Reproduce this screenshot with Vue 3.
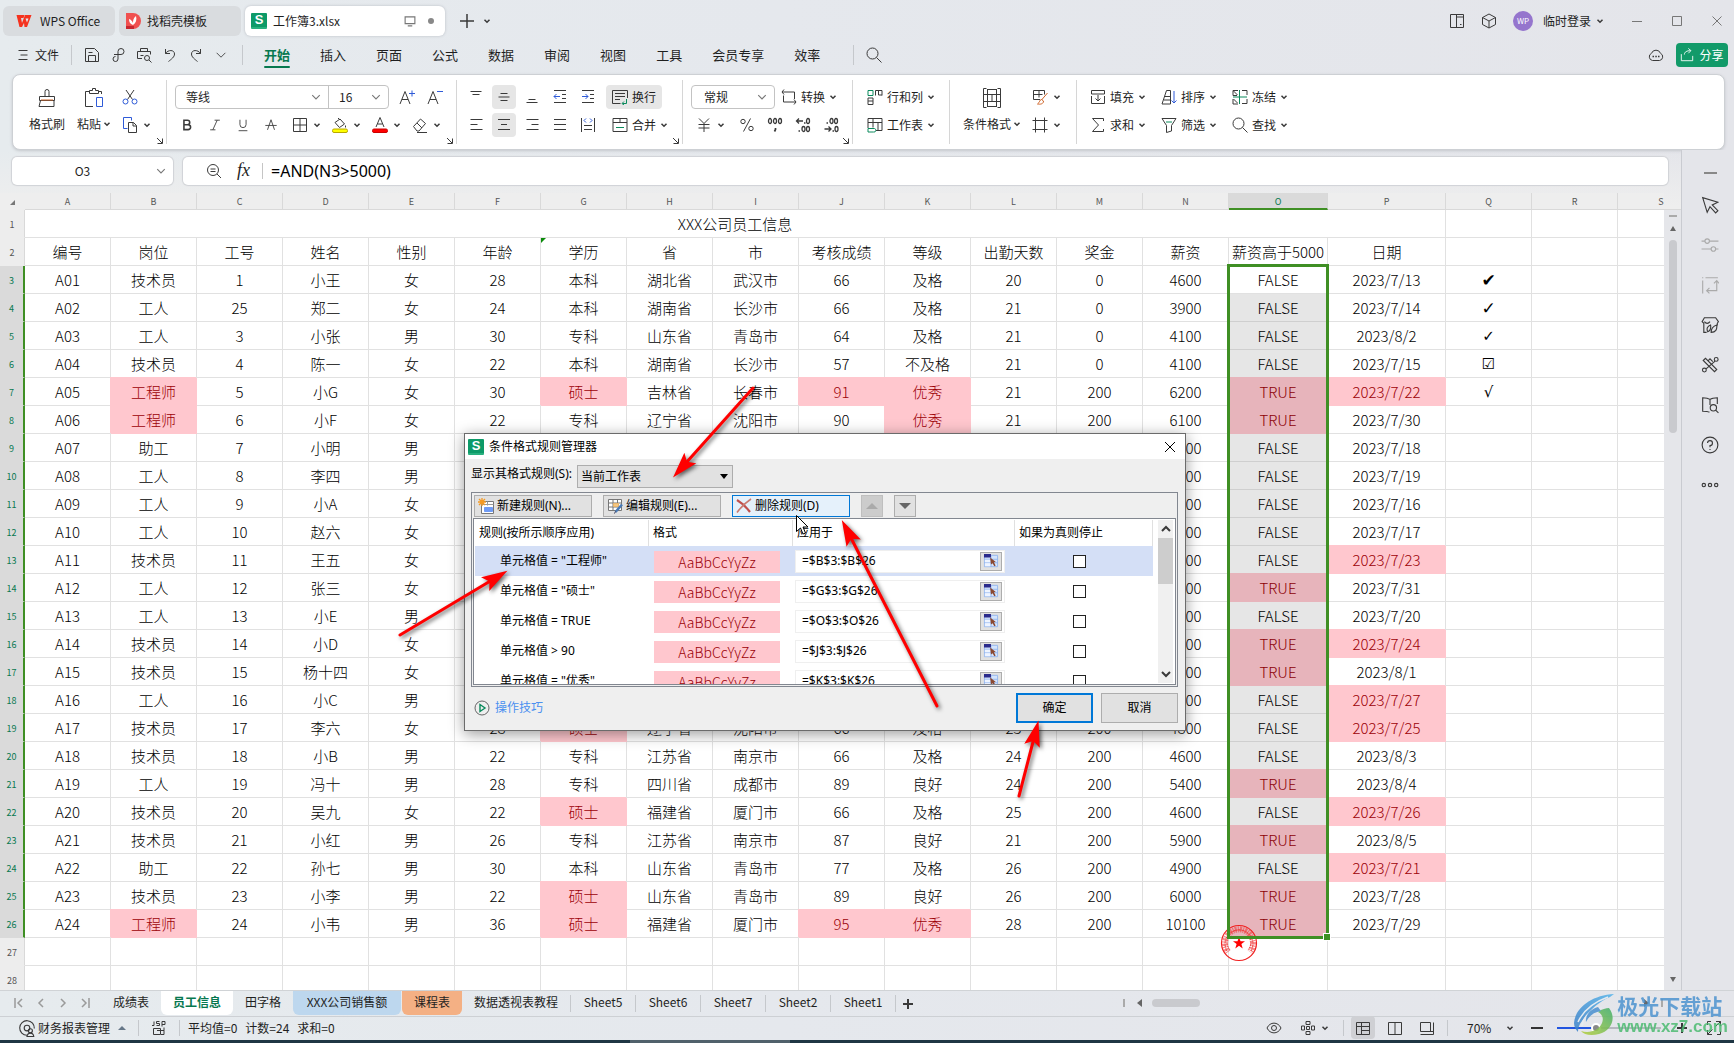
<script setup>
const G = '#0a8a5c'
const B = '#2f5bd8'
const O = '#d0662a'

// Icon bodies, drawn on a 16 x 16 grid
const ic = {
  menu: '<path d="M3.5 3.5h9M5.5 8h7M3.5 12.5h9"/>',
  save: '<path d="M1.5 1.5h9l4 4v9h-13zM4.5 14.5v-6h7v6M4.5 5.5h4"/>',
  link: '<path d="M5.5 9.5a2.5 2.5 0 1 0 2.500 2.500V4.500a3 3 0 1 1 3 3H4"/>',
  print: '<path d="M4.500 4.500v-3h7v3M6 11.500H1.500v-7h13v3M4.500 8.500h3"/><circle cx="11" cy="11" r="2.500"/><path d="M13 13l2.500 2.500"/>',
  undo: '<path d="M3.500 2v4.500h4.500M3.500 6.500C6 2.500 12.500 2.500 12.500 7c0 3-3 5-6 7.500"/>',
  redo: '<path d="M12.500 2v4.500H8M12.500 6.500C10 2.500 3.500 2.500 3.500 7c0 3 3 5 6 7.500"/>',
  chev: '<path d="M3 5.500l5 5 5-5"/>',
  search: '<circle cx="6.500" cy="6.500" r="5.500"/><path d="M10.500 10.500l5 5"/>',
  cut: `<path d="M4 1l6.500 9.500M12 1L5.500 10.500"/><g stroke="${B}"><circle cx="3.500" cy="12.500" r="2.500"/><circle cx="12.500" cy="12.500" r="2.500"/></g>`,
  copy: `<path stroke="${B}" d="M5.500 11.500h-4v-11h8v3"/><path d="M6.500 5.500h5l3 3v7h-8zM11 5.500v3.500h3.500"/>`,
  bold: '<path stroke-width="1.800" d="M4.500 2.500h4a2.600 2.600 0 0 1 0 5.200h-4zM4.500 7.700h4.800a2.800 2.800 0 0 1 0 5.600H4.500z"/>',
  italic: '<path d="M7.500 2.500h6M2.500 13.500h6M10.500 2.500l-5 11"/>',
  under: '<path d="M4.500 2v5.500a3.500 3.500 0 0 0 7 0V2M3 14.500h10"/>',
  strike: '<path d="M8 2L4 13.500M8 2l4 11.500M1.500 8.500h13"/>',
  border: '<path d="M1.500 1.500h13v13h-13zM8 1.500v13M1.500 8h13"/>',
  fill: '<path d="M3 5.500l5-3.500 4.500 5-5 3.500zM6 1l2 2M13.500 8.500v2"/><rect x="0.500" y="12" width="15" height="3.500" rx="1.500" fill="#ffff00" stroke="#b9a800"/>',
  font: '<path d="M8 0.500L4 10M8 0.500L12 10M5.500 7h5"/><rect x="0.500" y="12" width="15" height="3.500" rx="1.500" fill="#fe0000" stroke="#c00"/>',
  eraser: '<path d="M1.500 9.500l7-7.500 5 4.500-6.500 7.500H5zM5 6l5 5M5 15.500h10"/>',
  top: '<path d="M2.500 2.500h11M4.500 5.500h7"/>',
  mid: '<path d="M4.500 4.500h7M2.500 8h11M4.500 11.500h7"/>',
  bot: '<path d="M4.500 10.500h7M2.500 13.500h11"/>',
  left: '<path d="M2.500 2.500h12M2.500 7.500h7M2.500 12.500h12"/>',
  center: '<path d="M2 2.500h12M5 7.500h6M2 12.500h12"/>',
  right: '<path d="M2.500 2.500h12M7.500 7.500h7M2.500 12.500h12"/>',
  just: '<path d="M2 2.500h12M2 7.500h12M2 12.500h12"/>',
  outd: `<path d="M2 1.500h12M10 5.500h4M10 9.500h4M2 13.500h12"/><path stroke="${B}" d="M8 7.500H2M4.500 5L2 7.500 4.500 10"/>`,
  ind: `<path d="M2 1.500h12M10 5.500h4M10 9.500h4M2 13.500h12"/><path stroke="${B}" d="M2 7.500h6M5.500 5L8 7.500 5.500 10"/>`,
  dist: `<path d="M1.500 1v14M14.500 1v14M4 8.500h8M4 12.500h8"/><path stroke="${B}" d="M6 1.500L4 3.500l2 2M10 1.500l2 2-2 2"/>`,
  wrap: `<path d="M15.500 9V1.500H0.500v13h8M3 4.500h10M3 7.500h10M3 10.500h5"/><path stroke="${G}" d="M14.500 10v4.500h-4M12 12.500l-2 2 2 1.500"/>`,
  merge: `<path d="M1 1.500h14v13H1zM1 5.500h14M8 1.500v4"/><path stroke="${G}" d="M4 10.500h8"/>`,
  conv: '<path d="M3 0.500L1 3l2 2.500M1 3h12.500v7M13 15.500l2-2.500-2-2.500M15 13H2.500V6.500"/>',
  yen: '<path d="M3 1.500l5 5 5-5M8 6.500v8.500M2.500 7.500h11M2.500 11h11"/>',
  pct: '<circle cx="4" cy="4.500" r="2.200"/><circle cx="12" cy="11.500" r="2.200"/><path d="M11.500 1.500l-7 13"/>',
  th: '<g stroke-width="1.300"><ellipse cx="3" cy="4" rx="1.500" ry="2.500"/><ellipse cx="8" cy="4" rx="1.500" ry="2.500"/><ellipse cx="13" cy="4" rx="1.500" ry="2.500"/></g><path stroke-width="1.700" d="M8.500 11v1.500l-1 2"/>',
  dec0: '<g stroke-width="1.300"><ellipse cx="13" cy="4" rx="1.500" ry="2.500"/><path d="M9 6h1.500M8 4H1.500M4 1.500L1.500 4 4 6.500M3.500 14H5"/><ellipse cx="8.500" cy="12" rx="1.500" ry="2.500"/><ellipse cx="13" cy="12" rx="1.500" ry="2.500"/></g>',
  dec1: '<g stroke-width="1.300"><ellipse cx="8.500" cy="4" rx="1.500" ry="2.500"/><ellipse cx="13" cy="4" rx="1.500" ry="2.500"/><path d="M3.500 6H5M1.500 12H8M5.500 9.500L8 12l-2.500 2.500M9.500 14H11"/><ellipse cx="13.500" cy="12" rx="1.500" ry="2.500"/></g>',
  rowcol: `<path stroke="${G}" d="M1 1.500h5v5H1z"/><path d="M8.500 6.500v-5h6.500v5M11.500 1.500v4.500h3.500M1 9h5v6.500H1zM1 12h5"/>`,
  sheet: `<path d="M1 11V1.500h14v12H9M1 5.500h14M6 1.500v9M11 5.500v8"/><path stroke="${G}" d="M1 11.500h6.500a1.500 1.500 0 0 1-1 3.500H1z"/>`,
  table: `<path d="M8 10.500H1.500v-9h11v4M1.500 5.500h9M7 1.500v7"/><path stroke="${O}" d="M15.500 4L9.500 11M9.500 10.500c-2 0-1.500 3-4 4.500 3 .5 6 0 6-3z"/>`,
  frame: '<path d="M3.500 0.500v15M12.500 0.500v15M0.500 3.500h15M0.500 12.500h15"/>',
  filld: '<path d="M1.500 5V1.500h13V5M1.500 7v7.500h13V7M1.500 5h13M8 6v6M5.500 9.500L8 12l2.500-2.500"/>',
  sum: '<path d="M13.500 4V1.500h-11L8.500 8l-6 6.500h11V12"/>',
  sort: `<path d="M1 15l4.500-13.500H9.500V15M1 15h8.500M4 7.500h5.500M3 11h6.500"/><path stroke="${B}" d="M13 2v12M10.500 11.500L13 14l2.500-2.500"/>`,
  filter: `<path d="M1 1.500h14l-4.500 7V14l-5 1.500V8.500z"/><path stroke="${G}" d="M5 5h6"/>`,
  freeze: `<path d="M1 1.500h5M1 1.500v5M1 6.500h4M1.500 2l4 4M10 1.500h5v4.500M1 10v5h5M1.500 10l4 4M10 14.500h5V10"/><path stroke="${G}" d="M7.500 1v14M1 8h14"/>`,
  zoomf: '<circle cx="7" cy="7" r="5.500"/><path d="M11 11l4 4M4.500 6h5M4.500 8.500h5"/>',
  tablet: '<path d="M1.500 1.500h13v13h-13zM7.500 1.500v13M7.500 4h7M11 11.500h1.500"/>',
  cube: '<path d="M8 1l6.500 3.500v7L8 15l-6.500-3.500v-7zM1.500 4.500L8 8l6.500-3.500M8 8v7"/>',
  cloud: '<path d="M4.500 13.500a3.800 3.800 0 0 1-1-7.200 4.800 4.800 0 0 1 9 0 3.800 3.800 0 0 1-1 7.200z"/><path stroke-width="1.500" d="M4.500 9.500H6M7.300 9.500h1.500M10 9.500h1.500"/>',
  share: '<path d="M5 7.500c0-3 3-4.500 7-4.500M9.500 0.500L12.500 3 9.500 6M1.500 7v7.500h13V9"/>',
  monitor: '<path d="M1.500 2.500h13v9h-13zM5 14.500h6"/>',
  cursor: '<path d="M1.500 1.500l4 13 2.500-5 5 5.500 2-2-5-5 5-2.500z"/>',
  sliders: '<circle cx="5.500" cy="4.500" r="2"/><circle cx="11" cy="11.500" r="2"/><path d="M7.500 4.500h8M0.500 4.500h3M0.500 11.500H9M13 11.500h2.500"/>',
  swap: '<path d="M1.500 4v11.500M4 1.500h11M1 1.500h1M14 4v9H5M11.500 6.500L14 4l2 2.500M7.500 10.500L5 13l2.500 2.500"/>',
  story: '<path d="M5 14.500H2.500v-8L1 5l2-3.500h10L15.500 5l-1 1.500v2M3 5c1.500 2 3.500 2 5 0M6 14c-1.500-3 0-5 2.500-6 .5 3 0 5-2.500 6zM9 14.500c0-4 2-5.500 5-6.500.5 4-1 6.500-5 6.500z"/>',
  tools: '<path d="M2 4l2-2 10 10-2 2zM6 4.500l2-2 2.500 2.500"/><circle cx="3" cy="12.500" r="1.700"/><circle cx="13.500" cy="3" r="1.700"/><path d="M12.500 4.500L4.500 11.500"/>',
  book: '<path d="M8 3C6 1.500 4 1.500 1.500 1.500v12c2.500 0 4.500 0 6 1M8 3c2-1.500 4-1.500 6.500-1.500V7M8 3v5"/><circle cx="11" cy="10.500" r="2.800"/><path d="M13 12.500l2.500 2.500"/>',
  help: '<circle cx="8" cy="8" r="7"/><path d="M5.800 6.200A2.200 2.200 0 1 1 8 8.500V10M8 11.500v1"/>',
  more: '<circle cx="2.500" cy="8" r="1.500"/><circle cx="8" cy="8" r="1.500"/><circle cx="13.500" cy="8" r="1.500"/>',
  eye: '<path d="M1 8c3-6.500 11-6.500 14 0-3 6.500-11 6.500-14 0z"/><circle cx="8" cy="8" r="2.500"/>',
  cross: '<path d="M6 1.500h4v3H6zM6 11.500h4v3H6zM1.500 6h3v4h-3zM11.500 6h3v4h-3zM6.500 6.500h3v3h-3z"/>',
  v1: '<path d="M1.500 2.500h13v12h-13zM1.500 6.500h13M6.500 2.500v12M6.500 10.500h8"/>',
  v2: '<path d="M1.500 2.500h13v12h-13zM8 2.500v12"/>',
  v3: '<path d="M1.500 2.500h10v9h-10zM14.500 2.500v12h-13M8 11.500h6"/>',
  full: '<path d="M10 1.500h4.500V6M6 14.500H1.500V10M14.500 1.500L9.500 6.500M1.500 14.500l5-5M1.500 5V1.500H5M14.500 11v3.500H11"/>',
  macro: '<path d="M3 1.500v4h-2M8.500 1.500h-3v2h3v2h-3M11 6.500v-5h3v3h-3M2.500 8.500v6h7v-6zM6 10.500h7v-3M13 10.500v4h-3"/>',
  ring: '<path d="M8 14.500A6.500 6.500 0 1 1 14.500 8.500"/><circle cx="8" cy="8" r="2.500"/><circle cx="11" cy="10.500" r="1.800"/><path d="M8 15.500c.5-4 5.500-4 6 0z"/>',
  newr: '<path fill="#fff" stroke="#777" d="M3.500 3.500h12v12h-12z"/><path stroke="#999" d="M3.500 6.500h12M9.500 3.500v4"/><path fill="#6f9bf5" stroke="#6f9bf5" d="M6.500 9.500h8v4h-8z"/><path stroke="#f59a23" stroke-width="1.300" d="M4 0v8M0 4h8M1 1l6 6M7 1L1 7"/>',
  editr: '<path fill="#fff" stroke="#777" d="M1.500 1.500h13v11h-13zM1.500 5h13M6 1.500v11M1.500 9h13M10.500 1.500v4"/><path fill="#f5c884" stroke="#e8b46a" d="M6.500 5.500h5v3h-5z"/><path stroke="#4a7ab5" stroke-width="2.500" d="M15 6.500L8.500 14"/><path stroke="#335" d="M8.500 13.500L7.500 15.500"/>',
  delr: '<path stroke="#c0504d" stroke-width="2.200" d="M1 2c5 3 10 8 13 12"/><path stroke="#c97a70" stroke-width="1.600" d="M15 1C9 5 5 9 1 14.500"/>',
  pick: '<path fill="#d5e4fb" stroke="#8fb4ee" d="M0.500 1.500h15v13h-15z"/><path stroke="#8fb4ee" d="M0.500 6h15M0.500 10h15M8 1.500v13"/><path fill="#eef4ff" stroke="none" d="M1 6.500h6v3H1zM1 10.500h6v3.500H1z"/><path fill="#2b2b8c" stroke="none" d="M0 0h8v4H0z"/><path fill="#8b4a32" stroke="none" d="M7 4l6.500 5-2.200.5 2 3.500-1.500 1-2-3.500L8 12z"/>',
  play: `<circle cx="8" cy="8" r="7" stroke="#666"/><path stroke="${G}" stroke-width="1.400" d="M6 4.500l5 3.500-5 3.500z"/>`
}

const tabs = ['开始', '插入', '页面', '公式', '数据', '审阅', '视图', '工具', '会员专享', '效率']
const quick = ['save', 'link', 'print', 'undo', 'redo']
const side = ['cursor', 'sliders', 'swap', 'story', 'tools', 'book', 'help', 'more']

const cols = [
  ...'ABCDEFGHIJKLMN'.split('').map((n) => ({ n, w: 86 })),
  { n: 'O', w: 99 }, { n: 'P', w: 118 }, { n: 'Q', w: 86 }, { n: 'R', w: 86 }, { n: 'S', w: 86 }
]
const tableWidth = 25 + cols.reduce((s, c) => s + c.w, 0)

const header = ['编号', '岗位', '工号', '姓名', '性别', '年龄', '学历', '省', '市', '考核成绩', '等级', '出勤天数', '奖金', '薪资', '薪资高于5000', '日期', '', '', '']
const raw = `A01|技术员|1|小王|女|28|本科|湖北省|武汉市|66|及格|20|0|4600|FALSE|2023/7/13
A02|工人|25|郑二|女|24|本科|湖南省|长沙市|66|及格|21|0|3900|FALSE|2023/7/14
A03|工人|3|小张|男|30|专科|山东省|青岛市|64|及格|21|0|4100|FALSE|2023/8/2
A04|技术员|4|陈一|女|22|本科|湖南省|长沙市|57|不及格|21|0|4100|FALSE|2023/7/15
A05|工程师|5|小G|女|30|硕士|吉林省|长春市|91|优秀|21|200|6200|TRUE|2023/7/22
A06|工程师|6|小F|女|22|专科|辽宁省|沈阳市|90|优秀|21|200|6100|TRUE|2023/7/30
A07|助工|7|小明|男|||||||||4500|FALSE|2023/7/18
A08|工人|8|李四|男|||||||||4500|FALSE|2023/7/19
A09|工人|9|小A|女|||||||||4500|FALSE|2023/7/16
A10|工人|10|赵六|女|||||||||4500|FALSE|2023/7/17
A11|技术员|11|王五|女|||||||||4500|FALSE|2023/7/23
A12|工人|12|张三|女|||||||||5500|TRUE|2023/7/31
A13|工人|13|小E|男|||||||||4500|FALSE|2023/7/20
A14|技术员|14|小D|女|||||||||5500|TRUE|2023/7/24
A15|技术员|15|杨十四|女|||||||||5500|TRUE|2023/8/1
A16|工人|16|小C|男|||||||||4500|FALSE|2023/7/27
A17|技术员|17|李六|女|28|硕士|辽宁省|沈阳市|66|及格|23|200|4800|FALSE|2023/7/25
A18|技术员|18|小B|男|22|专科|江苏省|南京市|66|及格|24|200|4600|FALSE|2023/8/3
A19|工人|19|冯十|男|28|专科|四川省|成都市|89|良好|24|200|5400|TRUE|2023/8/4
A20|技术员|20|吴九|女|22|硕士|福建省|厦门市|66|及格|25|200|4600|FALSE|2023/7/26
A21|技术员|21|小红|男|26|专科|江苏省|南京市|87|良好|21|200|5900|TRUE|2023/8/5
A22|助工|22|孙七|男|30|本科|山东省|青岛市|77|及格|26|200|4900|FALSE|2023/7/21
A23|技术员|23|小李|男|22|硕士|山东省|青岛市|89|良好|26|200|6000|TRUE|2023/7/28
A24|工程师|24|小韦|男|36|硕士|福建省|厦门市|95|优秀|28|200|10100|TRUE|2023/7/29`
const marks = ['✔', '✓', '✓', '☑', '√']
const rows = raw.split('\n').map((l, i) => [...l.split('|'), marks[i] || '', '', ''])

function cellClass(v, c, r) {
  const cls = []
  if (
    (c === 1 && v === '工程师') ||
    (c === 6 && v === '硕士') ||
    (c === 9 && Number(v) > 90) ||
    (c === 10 && v === '优秀') ||
    (c === 15 && v >= '2023/7/21' && v <= '2023/7/27')
  ) cls.push('hit')
  if (c === 14) cls.push(v === 'TRUE' ? 'seltrue' : r > 0 ? 'sel' : '')
  if (c === 16) cls.push('mark', r < 2 ? 'heavy' : '')
  return cls
}

const rules = [
  ['单元格值 = "工程师"', '=$B$3:$B$26'],
  ['单元格值 = "硕士"', '=$G$3:$G$26'],
  ['单元格值 = TRUE', '=$O$3:$O$26'],
  ['单元格值 > 90', '=$J$3:$J$26'],
  ['单元格值 = "优秀"', '=$K$3:$K$26']
]
const plainSheets = ['Sheet5', 'Sheet6', 'Sheet7', 'Sheet2', 'Sheet1']
const arrows = [
  [753, 388, 685, 464],
  [400, 635, 492, 580],
  [937, 706, 850, 536],
  [1019, 796, 1034, 738]
]
</script>

<template>
  <div class="app">
    <header class="title">
      <button class="tab dark home">
        <svg class="logo" viewBox="0 0 16 16"><path d="M0.500 2h8L7.500 5H5l1 5 3-8h6.500L11 14H8.500L8 10l-2 4H3.500z" fill="#f5321e" /><path d="M9.500 5.500h3l-1.500 4z" fill="#e6e9ed" /></svg>
        WPS Office
      </button>
      <button class="tab dark tpl">
        <svg class="logo" viewBox="0 0 16 16"><path d="M1 0h7a8 8 0 0 1 0 16H1z" fill="#f0504f" /><path d="M1 13h8v3H1z" fill="#c8262f" /><path d="M8 12c-3-1-4-3-4-6 2 .5 3 2 4 4 0-3 .5-5 3-7 1 4 0 7-3 9z" fill="#fff" /></svg>
        找稻壳模板
      </button>
      <div class="tab active">
        <span class="slogo">S</span>
        <span class="fname">工作簿3.xlsx</span>
        <svg class="ic s12 dim" viewBox="0 0 16 16" v-html="ic.monitor" />
        <i class="dot" />
      </div>
      <button class="plain" aria-label="新建"><svg class="ic" viewBox="0 0 16 16"><path stroke-width="1.500" d="M8 1v14M1 8h14" /></svg></button>
      <button class="plain" aria-label="更多"><svg class="ic s8 bold" viewBox="0 0 16 16" v-html="ic.chev" /></button>
      <div class="grow" />
      <svg class="ic" viewBox="0 0 16 16" v-html="ic.tablet" />
      <svg class="ic ml16" viewBox="0 0 16 16" v-html="ic.cube" />
      <span class="avatar">WP</span>
      <button class="plain login">临时登录<svg class="ic s8 bold" viewBox="0 0 16 16" v-html="ic.chev" /></button>
      <div class="win">
        <button class="plain" aria-label="最小化"><svg class="ic s10" viewBox="0 0 10 10"><path d="M0 5.500h10" /></svg></button>
        <button class="plain" aria-label="最大化"><svg class="ic s10" viewBox="0 0 10 10"><path d="M0.500 0.500h9v9h-9z" /></svg></button>
        <button class="plain" aria-label="关闭"><svg class="ic s10" viewBox="0 0 10 10"><path d="M0.500 0.500l9 9M9.500 0.500l-9 9" /></svg></button>
      </div>
    </header>

    <nav class="menu">
      <button class="plain file"><svg class="ic" viewBox="0 0 16 16" v-html="ic.menu" />文件</button>
      <i class="vsep" />
      <div class="quick">
        <svg v-for="q in quick" :key="q" class="ic" viewBox="0 0 16 16" v-html="ic[q]" />
        <svg class="ic s14" viewBox="0 0 16 16" v-html="ic.chev" />
      </div>
      <i class="vsep" />
      <div class="mtabs">
        <button v-for="(t, i) in tabs" :key="t" class="mtab" :class="{ on: i === 0 }">{{ t }}</button>
      </div>
      <i class="vsep" />
      <svg class="ic find" viewBox="0 0 16 16" v-html="ic.search" />
      <div class="grow" />
      <svg class="ic" viewBox="0 0 16 16" v-html="ic.cloud" />
      <button class="share"><svg class="ic s14" viewBox="0 0 16 16" v-html="ic.share" />分享</button>
    </nav>

    <section class="ribbon">
      <div class="grp clip">
        <button class="big">
          <svg class="ic s20" viewBox="0 0 20 20"><path d="M2.500 8.500h15v4H2.500zM3.500 12.500L2 18.500h15v-6M8 8.500v-5a2 2 0 0 1 4 0v5" /><path stroke="#d0662a" d="M4 12h12" /></svg>
          <span>格式刷</span>
        </button>
        <button class="big">
          <svg class="ic s20" viewBox="0 0 20 20"><path d="M9 18.500H1.500v-15h4M14 3.500h3.500V6M5.500 5.500v-3h3v-2h3v2h3v3z" /><path stroke="#2f5bd8" d="M12.500 9.500h6v9h-6z" /></svg>
          <span>粘贴<svg class="ic s8 bold" viewBox="0 0 16 16" v-html="ic.chev" /></span>
        </button>
        <div class="col">
          <button class="sp"><svg class="ic" viewBox="0 0 16 16" v-html="ic.cut" /></button>
          <button class="sp"><svg class="ic" viewBox="0 0 16 16" v-html="ic.copy" /><svg class="ic s8 bold" viewBox="0 0 16 16" v-html="ic.chev" /></button>
        </div>
        <svg class="ic corner" viewBox="0 0 7 7"><path d="M1 1l5 5M6.500 1.500v5h-5" /></svg>
      </div>

      <div class="grp fontg">
        <div class="col">
          <div class="row">
            <div class="combo">
              <label class="cb fam"><input aria-label="字体" value="等线"><svg class="ic s12 dim" viewBox="0 0 16 16" v-html="ic.chev" /></label>
              <label class="cb size"><input aria-label="字号" value="16"><svg class="ic s12 dim" viewBox="0 0 16 16" v-html="ic.chev" /></label>
            </div>
            <button class="ib first"><svg class="ic" viewBox="0 0 16 16"><path d="M1 15L6 2.500 11 15M3 10.500h6" /><path stroke="#2f5bd8" d="M10 4.500h6M13 1.500v6" /></svg></button>
            <button class="ib"><svg class="ic" viewBox="0 0 16 16"><path d="M1 15L6 2.500 11 15M3 10.500h6" /><path stroke="#2f5bd8" d="M10 2.500h6" /></svg></button>
          </div>
          <div class="row">
            <button v-for="n in ['bold', 'italic', 'under', 'strike']" :key="n" class="ib"><svg class="ic s14" viewBox="0 0 16 16" v-html="ic[n]" /></button>
            <button v-for="n in ['border', 'fill', 'font', 'eraser']" :key="n" class="sp"><svg class="ic" viewBox="0 0 16 16" v-html="ic[n]" /><svg class="ic s8 bold" viewBox="0 0 16 16" v-html="ic.chev" /></button>
          </div>
        </div>
        <svg class="ic corner" viewBox="0 0 7 7"><path d="M1 1l5 5M6.500 1.500v5h-5" /></svg>
      </div>

      <div class="grp alg">
        <div class="col">
          <div class="row">
            <button v-for="n in ['top', 'mid', 'bot', 'outd', 'ind']" :key="n" class="ib" :class="{ on: n === 'mid' }"><svg class="ic" viewBox="0 0 16 16" v-html="ic[n]" /></button>
            <button class="tb on"><svg class="ic" viewBox="0 0 16 16" v-html="ic.wrap" />换行</button>
          </div>
          <div class="row">
            <button v-for="n in ['left', 'center', 'right', 'just', 'dist']" :key="n" class="ib" :class="{ on: n === 'center' }"><svg class="ic" viewBox="0 0 16 16" v-html="ic[n]" /></button>
            <button class="tb"><svg class="ic" viewBox="0 0 16 16" v-html="ic.merge" />合并<svg class="ic s8 bold" viewBox="0 0 16 16" v-html="ic.chev" /></button>
          </div>
        </div>
        <svg class="ic corner" viewBox="0 0 7 7"><path d="M1 1l5 5M6.500 1.500v5h-5" /></svg>
      </div>

      <div class="grp numg">
        <div class="col">
          <div class="row">
            <div class="combo">
              <label class="cb num"><input aria-label="数字格式" value="常规"><svg class="ic s12 dim" viewBox="0 0 16 16" v-html="ic.chev" /></label>
            </div>
            <button class="tb"><svg class="ic" viewBox="0 0 16 16" v-html="ic.conv" />转换<svg class="ic s8 bold" viewBox="0 0 16 16" v-html="ic.chev" /></button>
          </div>
          <div class="row">
            <button class="sp"><svg class="ic" viewBox="0 0 16 16" v-html="ic.yen" /><svg class="ic s8 bold" viewBox="0 0 16 16" v-html="ic.chev" /></button>
            <button v-for="n in ['pct', 'th', 'dec0', 'dec1']" :key="n" class="ib"><svg class="ic" viewBox="0 0 16 16" v-html="ic[n]" /></button>
          </div>
        </div>
        <svg class="ic corner" viewBox="0 0 7 7"><path d="M1 1l5 5M6.500 1.500v5h-5" /></svg>
      </div>

      <div class="grp rcg">
        <div class="col">
          <button class="tb"><svg class="ic" viewBox="0 0 16 16" v-html="ic.rowcol" />行和列<svg class="ic s8 bold" viewBox="0 0 16 16" v-html="ic.chev" /></button>
          <button class="tb"><svg class="ic" viewBox="0 0 16 16" v-html="ic.sheet" />工作表<svg class="ic s8 bold" viewBox="0 0 16 16" v-html="ic.chev" /></button>
        </div>
      </div>

      <div class="grp cfg">
        <button class="big">
          <svg class="ic s20" viewBox="0 0 20 20"><path d="M4.500 0.500h-3v19h3M15.500 0.500h3v19h-3M5.500 1v18M14.500 1v18M1.500 6.500h17M1.500 13.500h17M5.500 1.500h9M5.500 18.500h9M10 6.500v7" /></svg>
          <span>条件格式<svg class="ic s8 bold" viewBox="0 0 16 16" v-html="ic.chev" /></span>
        </button>
        <div class="col">
          <button class="sp"><svg class="ic" viewBox="0 0 16 16" v-html="ic.table" /><svg class="ic s8 bold" viewBox="0 0 16 16" v-html="ic.chev" /></button>
          <button class="sp"><svg class="ic" viewBox="0 0 16 16" v-html="ic.frame" /><svg class="ic s8 bold" viewBox="0 0 16 16" v-html="ic.chev" /></button>
        </div>
      </div>

      <div class="grp last">
        <div v-for="p in [['filld', '填充', 'sum', '求和'], ['sort', '排序', 'filter', '筛选'], ['freeze', '冻结', 'search', '查找']]" :key="p[0]" class="col">
          <button class="tb"><svg class="ic" viewBox="0 0 16 16" v-html="ic[p[0]]" />{{ p[1] }}<svg class="ic s8 bold" viewBox="0 0 16 16" v-html="ic.chev" /></button>
          <button class="tb"><svg class="ic" viewBox="0 0 16 16" v-html="ic[p[2]]" />{{ p[3] }}<svg class="ic s8 bold" viewBox="0 0 16 16" v-html="ic.chev" /></button>
        </div>
      </div>
    </section>

    <div class="work">
      <main class="main">
        <div class="fbar">
          <label class="namebox"><input aria-label="名称框" value="O3"><svg class="ic s12 dim" viewBox="0 0 16 16" v-html="ic.chev" /></label>
          <div class="formula">
            <svg class="ic" viewBox="0 0 16 16" v-html="ic.zoomf" />
            <span class="fx">fx</span>
            <i />
            <input aria-label="编辑栏" value="=AND(N3>5000)">
          </div>
        </div>

        <div class="sheet">
          <div class="canvas">
            <table :style="{ width: tableWidth + 'px' }">
              <colgroup>
                <col class="rh">
                <col v-for="c in cols" :key="c.n" :style="{ width: c.w + 'px' }">
              </colgroup>
              <thead>
                <tr>
                  <th class="cornerth"><i /></th>
                  <th v-for="c in cols" :key="c.n" :class="{ cur: c.n === 'O', lastc: c.n === 'S' }">{{ c.n }}</th>
                </tr>
              </thead>
              <tbody>
                <tr>
                  <th>1</th>
                  <td colspan="16">XXX公司员工信息</td>
                  <td /><td /><td />
                </tr>
                <tr>
                  <th>2</th>
                  <td v-for="(h, i) in header" :key="i">{{ h }}<i v-if="i === 6" class="note" /></td>
                </tr>
                <tr v-for="(r, ri) in rows" :key="ri">
                  <th class="on">{{ ri + 3 }}</th>
                  <td v-for="(v, ci) in r" :key="ci" :class="cellClass(v, ci, ri)">{{ v }}<span v-if="ri === 0 && ci === 14" class="outline"><b /></span></td>
                </tr>
                <tr v-for="n in [27, 28]" :key="n">
                  <th>{{ n }}</th>
                  <td v-for="c in cols" :key="c.n" />
                </tr>
              </tbody>
            </table>
          </div>
          <div class="vscroll"><i class="split" /><i class="up" /><i class="thumb" /><span class="grow" /><i class="down" /></div>
        </div>
      </main>
      <aside class="side">
        <i class="dash" />
        <svg v-for="(s, i) in side" :key="s" class="ic s18" :class="{ faint: i === 1 || i === 2 }" viewBox="0 0 16 16" v-html="ic[s]" />
      </aside>
    </div>

    <div class="stabs">
      <div class="navs">
        <svg class="ic s10" viewBox="0 0 10 10"><path d="M1 0v10M8 1L4 5l4 4" /></svg>
        <svg class="ic s10" viewBox="0 0 10 10"><path d="M7 1L3 5l4 4" /></svg>
        <svg class="ic s10" viewBox="0 0 10 10"><path d="M3 1l4 4-4 4" /></svg>
        <svg class="ic s10" viewBox="0 0 10 10"><path d="M2 1l4 4-4 4M9 0v10" /></svg>
      </div>
      <button class="st">成绩表</button>
      <button class="st act">员工信息</button>
      <button class="st">田字格</button>
      <button class="st blue">XXX公司销售额</button>
      <button class="st orange">课程表</button>
      <button class="st line">数据透视表教程</button>
      <button v-for="s in plainSheets" :key="s" class="st line lat">{{ s }}</button>
      <button class="plain add" aria-label="新建工作表"><svg class="ic s10" viewBox="0 0 10 10"><path stroke-width="2" d="M5 0v10M0 5h10" /></svg></button>
      <div class="grow" />
      <div class="hscroll"><i class="bar" /><i class="lt" /><i class="hthumb" /><span class="grow" /><i class="rt" /><i class="bar" /></div>
    </div>

    <footer class="status">
      <svg class="ic s18" viewBox="0 0 16 16" v-html="ic.ring" />
      <span class="rep">财务报表管理</span><i class="tri" />
      <i class="vs" />
      <svg class="ic" viewBox="0 0 16 16" v-html="ic.macro" />
      <i class="vs" />
      <span class="stats"><span>平均值=0</span><span>计数=24</span><span>求和=0</span></span>
      <div class="grow" />
      <div class="views">
        <svg class="ic" viewBox="0 0 16 16" v-html="ic.eye" />
        <span class="cx"><svg class="ic" viewBox="0 0 16 16" v-html="ic.cross" /><svg class="ic s8 bold" viewBox="0 0 16 16" v-html="ic.chev" /></span>
        <i class="vs" />
        <button class="vb on" aria-label="普通视图"><svg class="ic" viewBox="0 0 16 16" v-html="ic.v1" /></button>
        <button class="vb" aria-label="页面布局"><svg class="ic" viewBox="0 0 16 16" v-html="ic.v2" /></button>
        <button class="vb" aria-label="分页预览"><svg class="ic" viewBox="0 0 16 16" v-html="ic.v3" /></button>
        <i class="vs" />
        <span class="pc">70%</span>
        <svg class="ic s8 bold" viewBox="0 0 16 16" v-html="ic.chev" />
        <i class="minus" />
        <input class="zoomr" type="range" aria-label="缩放" min="0" max="100" value="36">
        <svg class="ic s10" viewBox="0 0 10 10"><path stroke-width="2" d="M5 0v10M0 5h10" /></svg>
        <svg class="ic fs" viewBox="0 0 16 16" v-html="ic.full" />
      </div>
    </footer>
    <div class="strip"><i /></div>

    <div class="dialog" role="dialog" aria-label="条件格式规则管理器">
      <div class="dt">
        <span class="slogo">S</span>条件格式规则管理器
        <span class="grow" />
        <button class="plain" aria-label="关闭"><svg class="ic s10 blk" viewBox="0 0 10 10"><path d="M0 0l10 10M10 0L0 10" /></svg></button>
      </div>
      <div class="show">
        <label for="scope">显示其格式规则(S):</label>
        <span class="selw"><select id="scope"><option>当前工作表</option></select><i /></span>
      </div>
      <div class="panel">
        <div class="btns">
          <button class="rb"><svg class="ic" viewBox="0 0 16 16" v-html="ic.newr" />新建规则(N)...</button>
          <button class="rb"><svg class="ic" viewBox="0 0 16 16" v-html="ic.editr" />编辑规则(E)...</button>
          <button class="rb hot"><svg class="ic" viewBox="0 0 16 16" v-html="ic.delr" />删除规则(D)</button>
          <button class="mv off" disabled aria-label="上移"><i class="up" /></button>
          <button class="mv" aria-label="下移"><i class="down" /></button>
        </div>
        <div class="list">
          <table class="rules">
            <thead><tr><th class="c1">规则(按所示顺序应用)</th><th class="c2">格式</th><th class="c3">应用于</th><th class="c4">如果为真则停止</th></tr></thead>
            <tbody>
              <tr v-for="(r, i) in rules" :key="i" :class="{ pickd: i === 0 }">
                <td class="rn">{{ r[0] }}</td>
                <td><span class="demo">AaBbCcYyZz</span></td>
                <td><span class="ref"><input :aria-label="'应用于 ' + r[0]" :value="r[1]"><button aria-label="选择区域"><svg class="ic" viewBox="0 0 16 16" v-html="ic.pick" /></button></span></td>
                <td class="ck"><input type="checkbox" :aria-label="'如果为真则停止 ' + r[0]"></td>
              </tr>
            </tbody>
          </table>
          <div class="ls"><svg class="ic s10" viewBox="0 0 10 10"><path stroke-width="2" d="M1 7l4-4 4 4" /></svg><i /><span class="grow" /><svg class="ic s10" viewBox="0 0 10 10"><path stroke-width="2" d="M1 3l4 4 4-4" /></svg></div>
        </div>
      </div>
      <div class="foot">
        <svg class="ic" viewBox="0 0 16 16" v-html="ic.play" />
        <a href="#">操作技巧</a>
        <span class="grow" />
        <button class="db ok">确定</button>
        <button class="db">取消</button>
      </div>
    </div>

    <svg class="stamp" viewBox="0 0 38 38">
      <circle cx="19" cy="19" r="17.500" fill="none" stroke="#f02020" stroke-width="1.200" />
      <g fill="none" stroke="#f04040">
        <path stroke-width="6" stroke-dasharray="1 1 2 1" opacity="0.600" d="M8 28A14 14 0 1 1 30 28" />
        <path stroke-width="1" stroke-dasharray="3 1" d="M7 27A14 14 0 1 1 31 27" />
        <path stroke-width="1" stroke-dasharray="2 1" d="M10 26A12 12 0 1 1 28 26" />
      </g>
      <path fill="#f00" d="M19 13l1.500 4.300H25l-3.600 2.700 1.300 4.500L19 21.800l-3.700 2.700 1.300-4.500L13 17.300h4.500z" />
    </svg>

    <div class="mark-logo">
      <svg viewBox="0 0 44 44">
        <defs>
          <linearGradient id="lb" x1="0" y1="1" x2="1" y2="0"><stop offset="0" stop-color="#3a7fc8" /><stop offset="1" stop-color="#55b4ea" /></linearGradient>
          <linearGradient id="lg" x1="0" y1="1" x2="1" y2="0"><stop offset="0" stop-color="#b8cf3c" /><stop offset="1" stop-color="#3fae6a" /></linearGradient>
        </defs>
        <path fill="url(#lb)" d="M42 1C20 2 3 15 2 30c0 4 2 7 4 9 0-4 1-7 4-11 6-9 16-19 28-24z" />
        <path fill="none" stroke="#e7ecf2" stroke-width="1.500" d="M6 29C12 16 22 9 36 4M10 33c1-10 10-17 20-18" />
        <path fill="url(#lg)" d="M37 15c8 10 2 23-10 26-8 2-15 1-18-3 9 3 18-1 21-8 2-5 0-9-4-11 4-3 8-4 11-4z" />
        <path fill="#4a90d0" d="M26 14c-8 2-13 9-12 15 3-6 8-10 15-11z" />
      </svg>
      <div><b>极光下载站</b><span>www.xz7.com</span></div>
    </div>

    <svg class="arrows">
      <defs>
        <marker id="ah" markerUnits="userSpaceOnUse" markerWidth="28" markerHeight="18" refX="8" refY="8" orient="auto"><path d="M0 0L26 8 0 16 5 8z" fill="#f00" /></marker>
      </defs>
      <line v-for="(a, i) in arrows" :key="i" :x1="a[0]" :y1="a[1]" :x2="a[2]" :y2="a[3]" marker-end="url(#ah)" />
    </svg>
    <svg class="mouse" viewBox="0 0 13 20"><path d="M0.500 0.500v16l4-3.500 2.500 6 2.500-1-2.500-6h5z" fill="#fff" stroke="#000" /></svg>
  </div>
</template>

<style>
body { margin: 0; overflow: hidden; }
</style>

<style scoped>
.app { position: relative; display: flex; flex-direction: column; height: 100vh; overflow: hidden; background: linear-gradient(90deg, #e6ebee, #e5e8ed 45%, #e4e5ea); color: #1f1f1f; font: 12px/16px "Noto Sans CJK SC", sans-serif; }
.app *, .app *::before { box-sizing: border-box; }
button, input, select { font: inherit; color: inherit; margin: 0; padding: 0; border: 0; background: none; }
.grow { flex: 1; }
.ic { width: 16px; height: 16px; flex: none; fill: none; stroke: #3a3a3a; stroke-width: 1; display: block; }
.ic.s8 { width: 8px; height: 8px; stroke-width: 2; }
.ic.s8.bold { stroke-width: 3; }
.ic.s10 { width: 10px; height: 10px; }
.ic.s12 { width: 12px; height: 12px; stroke-width: 1.3; }
.ic.s14 { width: 14px; height: 14px; }
.ic.s18 { width: 18px; height: 18px; }
.ic.s20 { width: 20px; height: 20px; }
.ic.dim { stroke: #777; stroke-width: 1.5; }
.ic.blk { stroke: #000; }
.ml16 { margin-left: 16px; }
.plain { display: flex; align-items: center; justify-content: center; }

.title { display: flex; align-items: center; height: 42px; padding: 0 10px 0 3px; flex: none; }
.tab { display: flex; align-items: center; gap: 6px; height: 30px; border-radius: 6px; margin-right: 4px; white-space: nowrap; }
.tab.dark { background: #d9dcdf; }
.home { width: 112px; padding-left: 13px; }
.tab.home { gap: 8px; }
.tpl { width: 122px; padding-left: 6px; }
.logo { width: 16px; height: 16px; }
.tab.active { width: 200px; background: #fff; box-shadow: 0 0 3px #b9bdc4; padding: 0 11px 0 6px; margin-right: 14px; }
.slogo { width: 16px; height: 16px; background: #0d9a68; color: #fff; border-bottom: 2px solid #27b07e; font: bold 13px/14px "Liberation Sans", sans-serif; text-align: center; border-radius: 1px; flex: none; }
.fname { flex: 1; }
.dot { width: 6px; height: 6px; border-radius: 50%; background: #888; margin-left: 6px; }
.title .plain + .plain { margin-left: 8px; }
.avatar { width: 20px; height: 20px; border-radius: 50%; background: #9575cd; color: #fff; font-size: 8px; line-height: 20px; text-align: center; margin: 0 10px 0 16px; }
.login { gap: 5px; }
.win { display: flex; gap: 30px; margin-left: 28px; padding-right: 2px; }
.title .win .plain + .plain { margin-left: 0; }
.win .ic { stroke: #777; }

.menu { display: flex; align-items: center; height: 32px; flex: none; padding: 0 6px 6px 15px; }
.file { gap: 4px; }
.vsep { width: 1px; height: 20px; background: #c5c8cc; margin: 0 12px; }
.quick { display: flex; align-items: center; gap: 10px; margin-right: 2px; }
.mtabs { display: flex; gap: 30px; margin: 0 21px 0 9px; }
.mtab { position: relative; font-size: 13px; line-height: 26px; height: 26px; white-space: nowrap; }
.mtab.on { color: #07784f; font-weight: bold; background: none; }
.mtab.on::before { content: ""; position: absolute; left: 0; right: 0; bottom: 0; height: 2px; background: #07784f; border-radius: 1px; }
.share { display: flex; align-items: center; justify-content: center; gap: 5px; width: 52px; height: 24px; background: #129a69; color: #fff; border-radius: 4px; margin-left: 12px; }
.share .ic { stroke: #fff; }

.ribbon { display: flex; flex: none; height: 76px; margin: 0 9px 0 12px; background: #fff; border: 1px solid #cdd0d4; border-radius: 8px; box-shadow: 0 1px 3px #c4c7cc; padding: 5px 0; white-space: nowrap; }
.grp { position: relative; display: flex; padding: 5px 0; border-right: 1px solid #d6d6d6; }
.grp.last { border: 0; }
.col { display: flex; flex-direction: column; gap: 4px; }
.row { display: flex; height: 24px; }
.big { display: flex; flex-direction: column; align-items: center; gap: 8px; padding-top: 3px; }
.big span { display: flex; align-items: center; gap: 2px; }
.clip { width: 154px; padding-left: 16px; }
.clip .big + .big { margin-left: 12px; }
.clip .col { margin-left: 4px; }
.ib { width: 24px; height: 24px; margin: 0 2px; display: flex; align-items: center; justify-content: center; border-radius: 4px; }
.sp { width: 40px; height: 24px; padding-left: 7px; display: flex; align-items: center; gap: 5px; }
.tb { height: 24px; display: flex; align-items: center; gap: 4px; padding: 0 6px; border-radius: 4px; }
.ib.on, .tb.on { background: #e6e6e6; }
.corner { position: absolute; right: 3px; bottom: 0; }
.ic.corner { width: 7px; height: 7px; }
.fontg { width: 290px; padding-left: 6px; }
.combo { display: flex; border: 1px solid #c3c3c3; border-radius: 4px; height: 24px; background: #fff; }
.cb { display: flex; align-items: center; padding: 0 6px 0 10px; }
.cb input { flex: 1; min-width: 0; width: 0; }
.fam { width: 152px; }
.size { width: 60px; border-left: 1px solid #c3c3c3; }
.num { width: 82px; padding-left: 12px; }
.fontg .combo { margin-left: 2px; }
.ib.first { margin-left: 6px; }
.alg { width: 226px; padding-left: 5px; }
.alg .tb { margin-left: 4px; }
.numg { width: 170px; padding-left: 5px; }
.numg .combo { margin-left: 3px; }
.numg .sp { width: 45px; padding-left: 8px; }
.rcg { width: 97px; padding-left: 8px; }
.cfg { width: 127px; padding-left: 13px; }
.cfg .col { margin-left: 4px; }
.last { padding-left: 7px; gap: 3px; }
.last .tb { gap: 4px; }

.work { display: flex; flex: 1; min-height: 0; }
.main { flex: 1; min-width: 0; display: flex; flex-direction: column; background: linear-gradient(rgba(238, 238, 238, 0), #eee 56px); border-right: 1px solid #c9cbd1; }
.fbar { display: flex; gap: 10px; padding: 7px 13px 8px 12px; flex: none; }
.namebox { width: 161px; height: 28px; background: #fff; border-radius: 5px; box-shadow: 0 0 1px 1px #d0d2d6; display: flex; align-items: center; padding: 0 6px; }
.namebox input { flex: 1; min-width: 0; text-align: center; padding-right: 8px; }
.formula { flex: 1; height: 28px; background: #fff; border-radius: 5px; box-shadow: 0 0 1px 1px #d0d2d6; display: flex; align-items: center; padding-left: 23px; }
.fx { font: italic 18px/20px "Liberation Serif", serif; margin: 0 12px 2px 15px; }
.formula i { width: 1px; height: 16px; background: #c5c5c5; margin-right: 8px; }
.formula input { flex: 1; font: 16px/20px "Noto Sans", "Noto Sans CJK SC", sans-serif; color: #000; }

.sheet { flex: 1; min-height: 0; display: flex; }
.canvas { flex: 1; min-width: 0; overflow: hidden; }
table { border-collapse: separate; border-spacing: 0; table-layout: fixed; }
.rh { width: 25px; }
.canvas th { font-size: 9px; line-height: 12px; font-weight: normal; color: #555; padding: 2px 0 0; background: #ededed; border-right: 1px solid #d9d9d9; border-bottom: 1px solid #d9d9d9; }
.canvas thead th { height: 17px; background: #eee; }
.canvas thead th.cur { background: #dadada; color: #07784f; border-bottom: 2px solid #3f8f24; }
.canvas th.lastc { border-right: 0; }
.canvas thead .cornerth { border-right-color: #eee; border-bottom-color: #eee; }
.cornerth i { display: block; width: 0; height: 0; margin-left: 10px; border-left: 5px solid transparent; border-bottom: 5px solid #777; }
.canvas tbody th { border-bottom-color: #ededed; }
.canvas tbody th.on { background: #dadada; color: #07784f; border-bottom-color: #dadada; border-right: 2px solid #3f8f24; }
.canvas td { position: relative; height: 28px; padding: 0; background: #fff; border-right: 1px solid #e1e1e1; border-bottom: 1px solid #e1e1e1; text-align: center; font-size: 15px; line-height: 20px; font-weight: 300; color: #000; white-space: nowrap; }
.canvas td.hit { background: #ffc7ce; border-color: #ffc7ce; color: #9c0006; box-shadow: -1px -1px 0 #ffc7ce; }
.canvas td.sel { background: #e6e6e6; border-color: #cfcfcf; }
.canvas td.seltrue { background: #e7b4bb; border-color: #e7b4bb; color: #8c0006; box-shadow: 0 -1px 0 #e7b4bb; }
.canvas td.mark { font-family: "DejaVu Sans", sans-serif; font-size: 15px; font-weight: normal; }
.canvas td.heavy { font-size: 17px; font-weight: bold; }
.note { position: absolute; left: 0; top: 0; border-top: 5px solid #0a8a0a; border-right: 5px solid transparent; }
.outline { position: absolute; z-index: 2; left: -2px; right: -2px; top: -2px; height: calc(28px * 24 + 3px); border: 3px solid #3f8f24; }
.outline b { position: absolute; right: -4px; bottom: -4px; width: 6px; height: 6px; background: #3f8f24; outline: 1px solid #fff; }
.vscroll { width: 17px; margin-top: 16px; border-top: 1px solid #d9d9d9; background: #e5e6ea; display: flex; flex-direction: column; align-items: center; }
.split { width: 8px; height: 2px; background: #aaa; margin-top: 5px; }
.up { border: 3px solid transparent; border-bottom: 5px solid #666; border-top: 0; margin-top: 9px; }
.thumb { width: 8px; height: 193px; background: #c9cace; border-radius: 4px; margin-top: 9px; }
.down { border: 3px solid transparent; border-top: 5px solid #666; border-bottom: 0; margin-bottom: 8px; }
.side { width: 52px; flex: none; display: flex; flex-direction: column; align-items: center; gap: 22px; padding: 22px 0 0 4px; background: #e4e5ea; }
.dash { width: 13px; height: 2px; background: #888; }
.side .faint { stroke: #aaa; }

.stabs { display: flex; align-items: flex-start; height: 27px; flex: none; border-top: 1px solid #d0d3d6; border-bottom: 1px solid #cdd0d4; }
.navs { display: flex; gap: 12px; padding: 7px 11px 0 14px; }
.navs .ic { stroke: #9a9a9a; stroke-width: 1.5; }
.st { height: 24px; padding: 0 12px 2px; line-height: 22px; white-space: nowrap; }
.st.act { background: #fff; color: #07784f; font-weight: bold; border-radius: 0 0 6px 6px; }
.st.blue { width: 108px; background: #bdd7ee; border-radius: 0 0 6px 6px; }
.st.orange { background: #f4b084; border-radius: 0 0 6px 6px; margin-left: 1px; }
.st.line { position: relative; padding-right: 13px; }
.st.line::before { content: ""; position: absolute; right: 0; top: 4px; height: 17px; border-right: 1px solid #c5c8cc; }
.st.lat { width: 65px; }
.add { padding: 8px 7px 0; }
.hscroll { width: 540px; display: flex; align-items: center; height: 24px; margin-right: 71px; }
.bar { width: 2px; height: 8px; background: #aaa; }
.lt { border: 4px solid transparent; border-right: 5px solid #666; border-left: 0; margin-left: 12px; }
.rt { border: 4px solid transparent; border-left: 5px solid #666; border-right: 0; margin-right: 12px; }
.hthumb { width: 48px; height: 8px; border-radius: 4px; background: #c9cace; margin-left: 10px; }

.status { display: flex; align-items: center; height: 23px; flex: none; padding: 0 12px 2px 18px; white-space: nowrap; }
.rep { margin-left: 2px; }
.tri { border: 4px solid transparent; border-bottom: 4px solid #678; border-top: 0; margin-left: 8px; }
.vs { width: 1px; height: 16px; background: #c5c8cc; margin: 0 12px; }
.stats { display: flex; gap: 8px; margin-left: -4px; }
.views { display: flex; align-items: center; }
.cx { display: flex; align-items: center; gap: 5px; margin-left: 18px; }
.views .vs { margin: 0 7px 0 14px; }
.vb { width: 24px; height: 23px; border-radius: 4px; display: flex; align-items: center; justify-content: center; margin-right: 8px; }
.vb.on { background: #cfd0d4; }
.views .vb + .vs { margin: 0 19px 0 0; }
.pc { width: 39px; }
.minus { width: 12px; height: 2px; background: #333; margin: 0 14px 0 17px; }
.zoomr { appearance: none; width: 104px; height: 12px; margin-right: 16px; background: linear-gradient(90deg, #2255e0 36%, #b5b8be 36%) center / 100% 2px no-repeat; }
.zoomr::-webkit-slider-thumb { appearance: none; width: 10px; height: 10px; border-radius: 50%; background: #888; border: 2px solid #fff; }
.fs { margin-left: 19px; }
.strip { height: 3px; flex: none; background: #1f3644; display: flex; padding-left: 630px; }
.strip i { width: 160px; background: #50616b; }

.dialog { position: absolute; left: 464px; top: 433px; width: 722px; background: #efefef; border: 1px solid #6b6b6b; box-shadow: 0 3px 14px rgba(0, 0, 0, 0.4); color: #000; padding-bottom: 7px; font-family: "Noto Sans", "Noto Sans CJK SC", sans-serif; }
.dt { display: flex; align-items: center; height: 25px; background: #fff; padding: 0 10px 0 3px; }
.dt .slogo { margin-right: 5px; }
.show { display: flex; gap: 3px; padding: 6px 6px 0; }
.show label { width: 103px; line-height: 18px; white-space: nowrap; }
.selw { position: relative; }
.selw select { appearance: none; display: block; width: 156px; height: 23px; background: #e1e1e1; border: 1px solid #adadad; padding-left: 3px; }
.selw i { position: absolute; right: 5px; top: 9px; border: 4px solid transparent; border-top: 5px solid #000; border-bottom: 0; }
.panel { margin: 4px 7px 0 6px; border: 1px solid #828790; padding: 2px 1px 1px; }
.btns { display: flex; gap: 11px; padding-left: 1px; margin-bottom: 1px; }
.rb { width: 118px; height: 22px; display: flex; align-items: center; gap: 3px; background: #e1e1e1; border: 1px solid #adadad; padding-left: 3px; white-space: nowrap; }
.rb.hot { border-color: #0078d7; background: #e5f1fb; }
.mv { width: 22px; height: 22px; background: #e1e1e1; border: 1px solid #adadad; display: flex; align-items: center; justify-content: center; }
.mv .up { margin: 0; border: 6px solid transparent; border-bottom: 6px solid #aaa; border-top: 0; }
.mv .down { margin: 0; border: 6px solid transparent; border-top: 6px solid #666; border-bottom: 0; }
.mv.off { background: #ccc; border-color: #bfbfbf; }
.list { display: flex; justify-content: space-between; height: 167px; overflow: hidden; border: 1px solid #828790; background: #fff; padding: 1px 2px 1px 1px; }
.rules { width: 678px; }
.rules th { height: 26px; padding: 0 0 0 4px; text-align: left; font-weight: normal; border-right: 1px solid #e0e0e0; }
.c1 { width: 174px; }
.c2 { width: 144px; }
.c3 { width: 222px; }
.c4 { width: 138px; }
.rules td { height: 30px; padding: 0; }
.rules .rn { padding-left: 25px; white-space: pre; }
.pickd td { background: #d4dff6; }
.demo { display: block; margin: 1px 13px 0 5px; height: 22px; background: #ffc7ce; color: #9c0006; font: 300 14px/22px "Noto Sans CJK SC", sans-serif; text-align: center; }
.ref { display: flex; align-items: center; width: 210px; height: 23px; margin-left: 2px; background: #fff; border: 1px solid #efefef; padding: 0 2px 0 6px; }
.ref input { flex: 1; min-width: 0; }
.ref button { width: 22px; height: 19px; background: #e1e1e1; border: 1px solid #adadad; display: flex; align-items: center; justify-content: center; }
.ref .ic { height: 14px; }
.ck input { appearance: none; display: block; width: 13px; height: 13px; margin: 0 auto; background: #fff; border: 1px solid #222; }
.rules .ck { padding-right: 10px; }
.ls { width: 15px; background: #f0f0f0; display: flex; flex-direction: column; align-items: center; padding: 4px 0; }
.ls i { width: 15px; height: 46px; background: #cdcdcd; margin-top: 4px; flex: none; }
.foot { display: flex; align-items: center; padding: 6px 7px 0 9px; }
.foot a { color: #4a90f0; text-decoration: none; margin-left: 5px; }
.db { width: 77px; height: 30px; background: #e1e1e1; border: 1px solid #adadad; margin-left: 8px; }
.db.ok { border: 2px solid #0078d7; }

.stamp { position: absolute; left: 1220px; top: 924px; width: 38px; height: 38px; }
.mark-logo { position: absolute; right: 6px; bottom: 6px; display: flex; gap: 1px; opacity: 0.85; pointer-events: none; }
.mark-logo svg { width: 44px; height: 44px; }
.mark-logo div { display: flex; flex-direction: column; }
.mark-logo b { font-size: 21px; line-height: 24px; color: #4d93cf; }
.mark-logo span { font: bold 17px/20px "Liberation Sans", sans-serif; color: #4dbb72; }
.arrows { position: absolute; left: 0; top: 0; width: 100%; height: 100%; pointer-events: none; filter: drop-shadow(2px 2px 2px rgba(0, 0, 0, 0.6)); }
.arrows line { stroke: #f00; stroke-width: 3; stroke-linecap: round; }
.mouse { position: absolute; left: 796px; top: 515px; width: 13px; height: 20px; }
</style>
